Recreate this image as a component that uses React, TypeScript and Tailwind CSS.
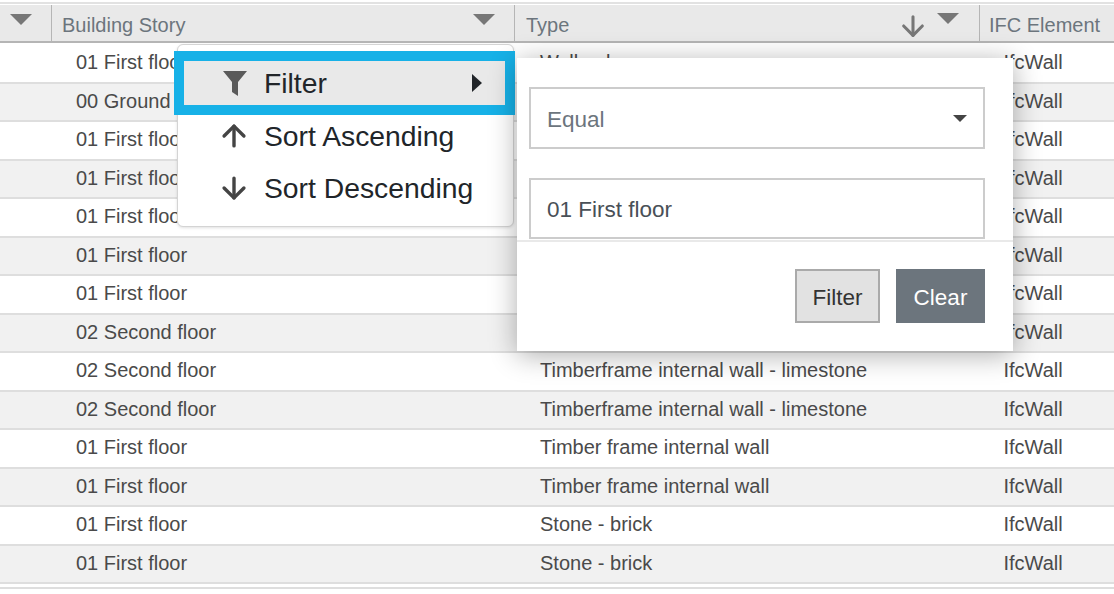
import { ArrowDown, ArrowUp } from "lucide-react";

const rows = [
  ["01 First floor", "Wall - clay"],
  ["00 Ground floor", ""],
  ["01 First floor", ""],
  ["01 First floor", ""],
  ["01 First floor", ""],
  ["01 First floor", ""],
  ["01 First floor", ""],
  ["02 Second floor", ""],
  ["02 Second floor", "Timberframe internal wall - limestone"],
  ["02 Second floor", "Timberframe internal wall - limestone"],
  ["01 First floor", "Timber frame internal wall"],
  ["01 First floor", "Timber frame internal wall"],
  ["01 First floor", "Stone - brick"],
  ["01 First floor", "Stone - brick"],
];

function Caret({ className }: { className: string }) {
  return (
    <svg viewBox="0 0 22 11" className={className} fill="#777777">
      <path d="M0 0h22L11 11z" />
    </svg>
  );
}

function FilterMenu() {
  return (
    <div className="absolute left-[177px] top-[44px] h-[183px] w-[337px] rounded-[6px] border border-[#d4d4d4] bg-white shadow-[0_1px_3px_rgba(0,0,0,0.12)]">
      <div className="absolute -left-[4px] top-[6px] flex h-[64px] w-[341px] items-center border-[10px] border-[#17b1e7] bg-[#e9e9e9] pl-[39px] pr-[23px] text-[28.3px] leading-none text-[#212529]">
        <svg viewBox="0 0 24 25" className="h-[25px] w-[24px]" fill="#5a5a5a">
          <path d="M0 0h24L15 11v14l-6-4V11z" />
        </svg>
        <span className="ml-[17px] flex-1">Filter</span>
        <svg viewBox="0 0 10 18" className="h-[18px] w-[10px]" fill="#212529">
          <path d="M0 0l10 9-10 9z" />
        </svg>
      </div>
      <div className="absolute left-[39px] top-[65px] flex flex-col text-[28.3px] leading-[52px] text-[#212529]">
        <div className="flex items-center gap-[13px]">
          <ArrowUp size={34} strokeWidth={2.4} className="text-[#444444]" />
          <span>Sort Ascending</span>
        </div>
        <div className="flex items-center gap-[13px]">
          <ArrowDown size={34} strokeWidth={2.4} className="text-[#444444]" />
          <span>Sort Descending</span>
        </div>
      </div>
    </div>
  );
}

function FilterPanel() {
  return (
    <div className="absolute left-[517px] top-[58px] h-[293px] w-[496px] bg-white text-[22.5px] text-[#495057] shadow-[0_4px_26px_rgba(0,0,0,0.32)]">
      <div className="ml-[12px] mt-[29px] flex h-[62px] w-[456px] items-center justify-between border-2 border-[#cccccc] px-[16px] pt-[3px] text-[#6c757d]">
        <span>Equal</span>
        <svg viewBox="0 0 14 7" className="-mt-[3px] h-[7px] w-[14px]" fill="#444444">
          <path d="M0 0h14L7 7z" />
        </svg>
      </div>
      <div className="ml-[12px] mt-[29px] flex h-[61px] w-[456px] items-center border-2 border-[#cccccc] pl-[16px] pt-[3px]">
        01 First floor
      </div>
      <div className="mt-[1px] h-[2px] bg-[#e9e9e9]" />
      <div className="mr-[28px] mt-[27px] flex justify-end gap-[16px]">
        <div className="flex h-[54px] w-[85px] items-center justify-center border-2 border-[#aaaaaa] bg-[#e2e2e2] pt-[3px] text-[#333333]">
          Filter
        </div>
        <div className="flex h-[54px] w-[89px] items-center justify-center bg-[#6c757d] pt-[3px] text-white">
          Clear
        </div>
      </div>
    </div>
  );
}

export default function App() {
  return (
    <div className="relative h-[594px] w-[1114px] overflow-hidden bg-white font-['Liberation_Sans',Arial,sans-serif] text-[20px] text-[#4a4a4a]">
      <div className="mt-[2px] h-[5px] border-t-[2px] border-[#e2e2e2]" />
      <div className="-mt-[2px] flex h-[38px] border-b-2 border-[#b5b5b5] bg-[#e9e9e9] text-[#6c757d]">
        <div className="relative w-[52px] border-r border-[#b5b5b5]">
          <Caret className="absolute left-[10px] top-[9px] h-[11px] w-[22px]" />
        </div>
        <div className="relative flex w-[463px] items-center border-r border-[#b5b5b5] pl-[10px] pt-[3px]">
          Building Story
          <Caret className="absolute right-[19px] top-[9px] h-[11px] w-[22px]" />
        </div>
        <div className="relative flex w-[465px] items-center border-r border-[#b5b5b5] pl-[11px] pt-[3px]">
          Type
          <ArrowDown size={32} strokeWidth={2.3} className="absolute right-[50px] top-[5px] text-[#777777]" />
          <Caret className="absolute right-[20px] top-[8px] h-[11px] w-[22px]" />
        </div>
        <div className="flex flex-1 items-center pl-[9px] pt-[3px]">IFC Element</div>
      </div>
      <div className="pt-[2px]">
        {rows.map((row, i) => (
          <div
            key={i}
            className={`flex h-[38.5px] items-center border-b-2 border-[#dedede] pb-[2px] ${
              i % 2 === 0 ? "bg-white" : "bg-[#f1f1f1]"
            }`}
          >
            <div className="w-[76px]" />
            <div className="w-[464px]">{row[0]}</div>
            <div className="w-[463.5px]">{row[1]}</div>
            <div>IfcWall</div>
          </div>
        ))}
      </div>
      <div className="mt-[3px] h-[2px] bg-[#dedede]" />
      <FilterMenu />
      <FilterPanel />
    </div>
  );
}
